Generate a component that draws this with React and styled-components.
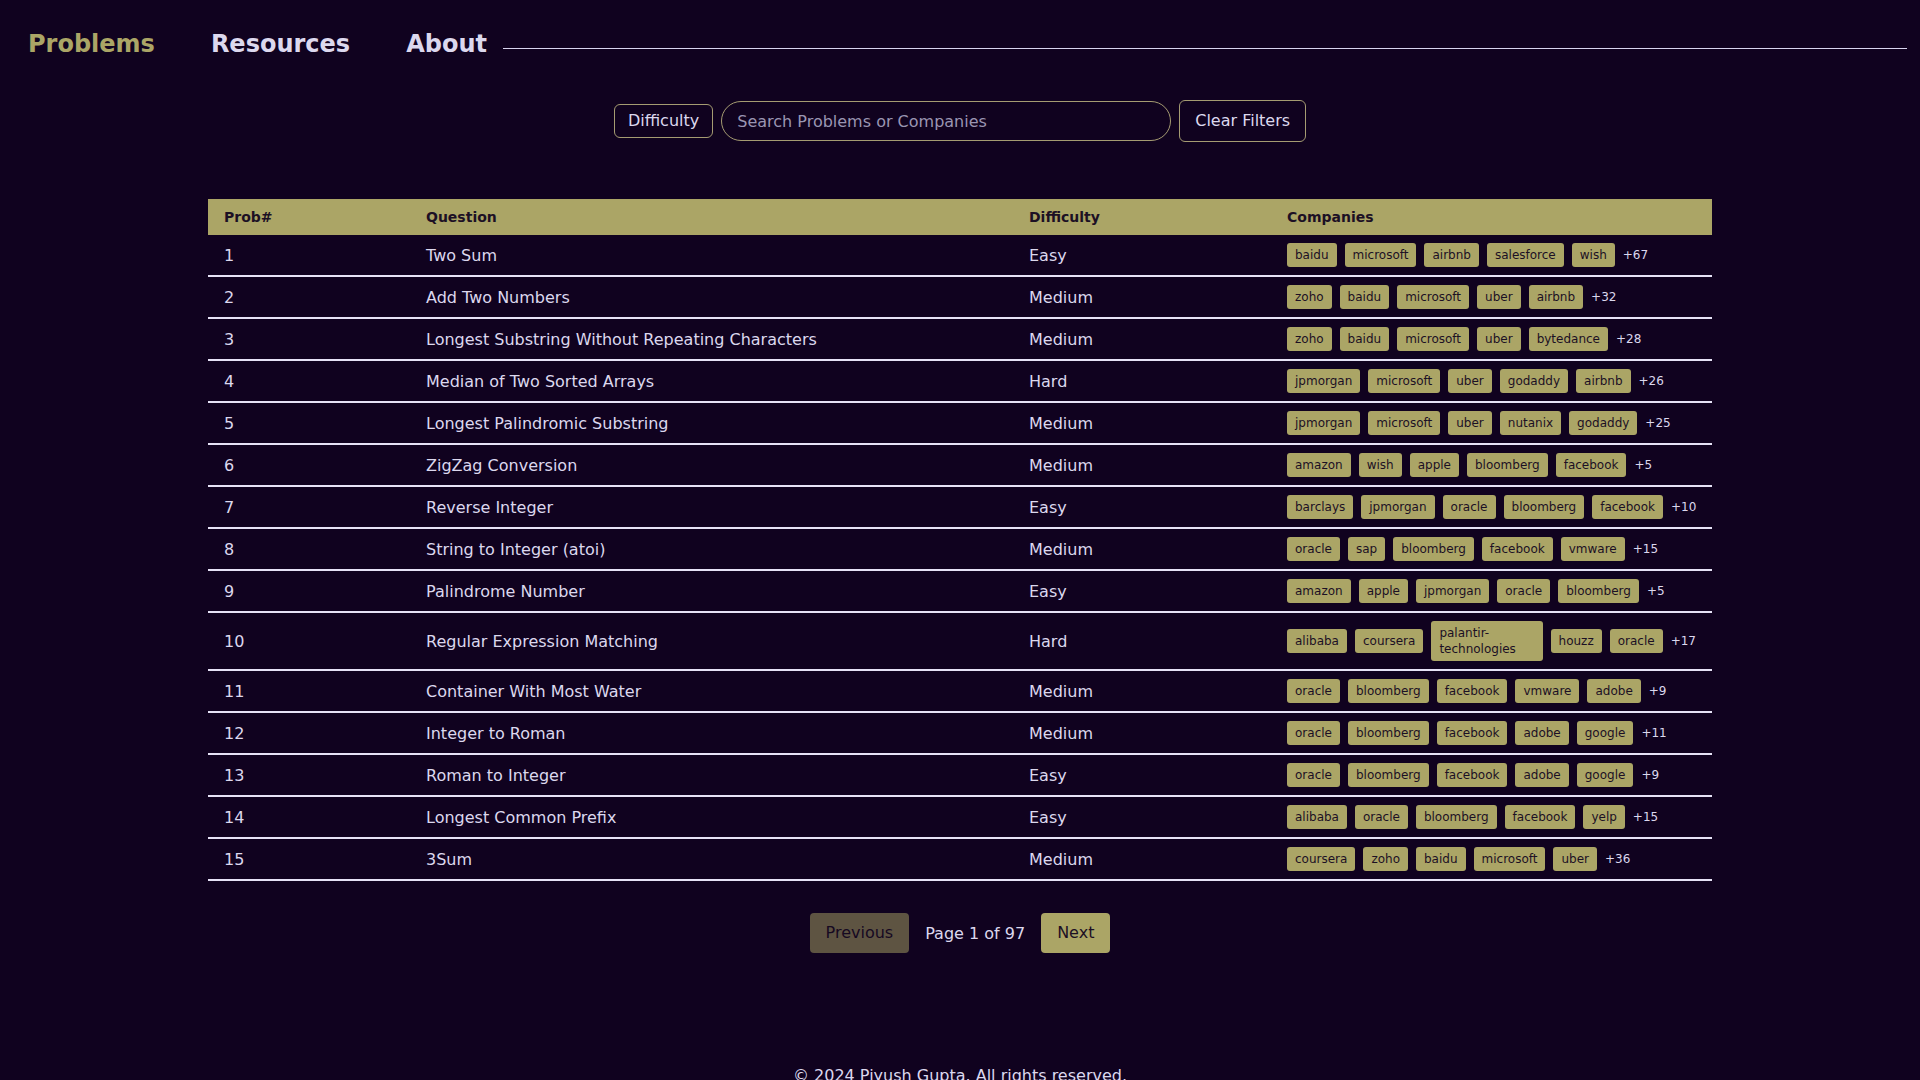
import React from 'react';
import styled, {createGlobalStyle} from 'styled-components';

const GOLD = '#aba566';
const BG = '#10021f';
const TEXT = '#dcd8ee';
const DARK = '#1c1024';

const problems = [
    {id: 1, title: 'Two Sum', difficulty: 'Easy', companies: ['baidu', 'microsoft', 'airbnb', 'salesforce', 'wish'], more: 67},
    {id: 2, title: 'Add Two Numbers', difficulty: 'Medium', companies: ['zoho', 'baidu', 'microsoft', 'uber', 'airbnb'], more: 32},
    {id: 3, title: 'Longest Substring Without Repeating Characters', difficulty: 'Medium', companies: ['zoho', 'baidu', 'microsoft', 'uber', 'bytedance'], more: 28},
    {id: 4, title: 'Median of Two Sorted Arrays', difficulty: 'Hard', companies: ['jpmorgan', 'microsoft', 'uber', 'godaddy', 'airbnb'], more: 26},
    {id: 5, title: 'Longest Palindromic Substring', difficulty: 'Medium', companies: ['jpmorgan', 'microsoft', 'uber', 'nutanix', 'godaddy'], more: 25},
    {id: 6, title: 'ZigZag Conversion', difficulty: 'Medium', companies: ['amazon', 'wish', 'apple', 'bloomberg', 'facebook'], more: 5},
    {id: 7, title: 'Reverse Integer', difficulty: 'Easy', companies: ['barclays', 'jpmorgan', 'oracle', 'bloomberg', 'facebook'], more: 10},
    {id: 8, title: 'String to Integer (atoi)', difficulty: 'Medium', companies: ['oracle', 'sap', 'bloomberg', 'facebook', 'vmware'], more: 15},
    {id: 9, title: 'Palindrome Number', difficulty: 'Easy', companies: ['amazon', 'apple', 'jpmorgan', 'oracle', 'bloomberg'], more: 5},
    {id: 10, title: 'Regular Expression Matching', difficulty: 'Hard', companies: ['alibaba', 'coursera', 'palantir-technologies', 'houzz', 'oracle'], more: 17},
    {id: 11, title: 'Container With Most Water', difficulty: 'Medium', companies: ['oracle', 'bloomberg', 'facebook', 'vmware', 'adobe'], more: 9},
    {id: 12, title: 'Integer to Roman', difficulty: 'Medium', companies: ['oracle', 'bloomberg', 'facebook', 'adobe', 'google'], more: 11},
    {id: 13, title: 'Roman to Integer', difficulty: 'Easy', companies: ['oracle', 'bloomberg', 'facebook', 'adobe', 'google'], more: 9},
    {id: 14, title: 'Longest Common Prefix', difficulty: 'Easy', companies: ['alibaba', 'oracle', 'bloomberg', 'facebook', 'yelp'], more: 15},
    {id: 15, title: '3Sum', difficulty: 'Medium', companies: ['coursera', 'zoho', 'baidu', 'microsoft', 'uber'], more: 36},
];

const App = () => {
    return (
        <>
            <GlobalStyle/>
            <Nav>
                <NavLinks>
                    <NavLink $active>Problems</NavLink>
                    <NavLink>Resources</NavLink>
                    <NavLink>About</NavLink>
                </NavLinks>
                <NavRule/>
            </Nav>

            <Main>
                <Filters>
                    <FilterButton>Difficulty</FilterButton>
                    <SearchInput placeholder="Search Problems or Companies"/>
                    <ClearButton>Clear Filters</ClearButton>
                </Filters>

                <Table>
                    <colgroup>
                        <col style={{width: 202}}/>
                        <col style={{width: 603}}/>
                        <col style={{width: 258}}/>
                        <col style={{width: 441}}/>
                    </colgroup>
                    <thead>
                    <tr>
                        <Th>Prob#</Th>
                        <Th>Question</Th>
                        <Th>Difficulty</Th>
                        <Th>Companies</Th>
                    </tr>
                    </thead>
                    <tbody>
                    {problems.map(p => (
                        <tr key={p.id}>
                            <Td>{p.id}</Td>
                            <Td>{p.title}</Td>
                            <Td>{p.difficulty}</Td>
                            <Td>
                                <Tags>
                                    {p.companies.map(c => <Tag key={c}>{c}</Tag>)}
                                    <More>+{p.more}</More>
                                </Tags>
                            </Td>
                        </tr>
                    ))}
                    </tbody>
                </Table>

                <Pagination>
                    <PageButton disabled>Previous</PageButton>
                    <PageInfo>Page 1 of 97</PageInfo>
                    <PageButton>Next</PageButton>
                </Pagination>
            </Main>

            <Footer>© 2024 Piyush Gupta. All rights reserved.</Footer>
        </>
    )
};

export default App

const GlobalStyle = createGlobalStyle`
    body {
        margin: 0;
        background: ${BG};
        color: ${TEXT};
        font-family: "DejaVu Sans", Verdana, sans-serif;
    }
`;

const Nav = styled.nav`
    display: flex;
    align-items: center;
    padding: 30px 13px 0 28px;
`;

const NavLinks = styled.div`
    display: flex;
    gap: 56px;
`;

const NavLink = styled.a`
    font-size: 24px;
    font-weight: bold;
    color: ${p => p.$active ? GOLD : TEXT};
    cursor: pointer;
`;

const NavRule = styled.div`
    flex: 1;
    height: 1px;
    margin: 8px 0 0 16px;
    background: #d8d4ee;
`;

const Main = styled.main`
    padding: 0 20px;
`;

const Filters = styled.div`
    display: flex;
    align-items: center;
    justify-content: center;
    gap: 8px;
    margin-top: 42px;
`;

const FilterButton = styled.button`
    font-family: inherit;
    font-size: 16px;
    line-height: 20px;
    padding: 6px 13px;
    background: transparent;
    color: ${TEXT};
    border: 1px solid #a59c72;
    border-radius: 6px;
`;

const ClearButton = styled(FilterButton)`
    padding: 10px 15px;
`;

const SearchInput = styled.input`
    box-sizing: border-box;
    width: 450px;
    height: 40px;
    padding: 0 15px;
    font-family: inherit;
    font-size: 16px;
    background: transparent;
    color: ${TEXT};
    border: 1px solid #a59c72;
    border-radius: 20px;
    outline: none;

    &::placeholder {
        color: #9a95b2;
    }
`;

const Table = styled.table`
    width: 80%;
    margin: 57px auto 0;
    table-layout: fixed;
    border-collapse: separate;
    border-spacing: 0;
`;

const Th = styled.th`
    background: ${GOLD};
    color: ${DARK};
    font-size: 14px;
    line-height: 18px;
    font-weight: bold;
    text-align: left;
    padding: 9px 16px;
`;

const Td = styled.td`
    font-size: 16px;
    padding: 8px 16px;
    color: ${TEXT};
    vertical-align: middle;
    border-bottom: 2px solid #e6e2f6;
`;

const Tags = styled.div`
    display: flex;
    align-items: center;
    gap: 8px;
`;

const Tag = styled.span`
    background: ${GOLD};
    color: ${DARK};
    font-size: 12px;
    line-height: 16px;
    padding: 4px 8px;
    border-radius: 3px;
`;

const More = styled.span`
    font-size: 12px;
    color: ${TEXT};
`;

const Pagination = styled.div`
    display: flex;
    align-items: center;
    justify-content: center;
    gap: 16px;
    margin-top: 32px;
`;

const PageButton = styled.button`
    font-family: inherit;
    font-size: 16px;
    line-height: 20px;
    padding: 10px 16px;
    border: none;
    border-radius: 4px;
    background: ${GOLD};
    color: ${DARK};

    &:disabled {
        opacity: 0.5;
    }
`;

const PageInfo = styled.span`
    font-size: 16px;
    color: ${TEXT};
`;

const Footer = styled.footer`
    margin-top: 113px;
    padding-bottom: 20px;
    text-align: center;
    font-size: 16px;
    color: ${TEXT};
`;
